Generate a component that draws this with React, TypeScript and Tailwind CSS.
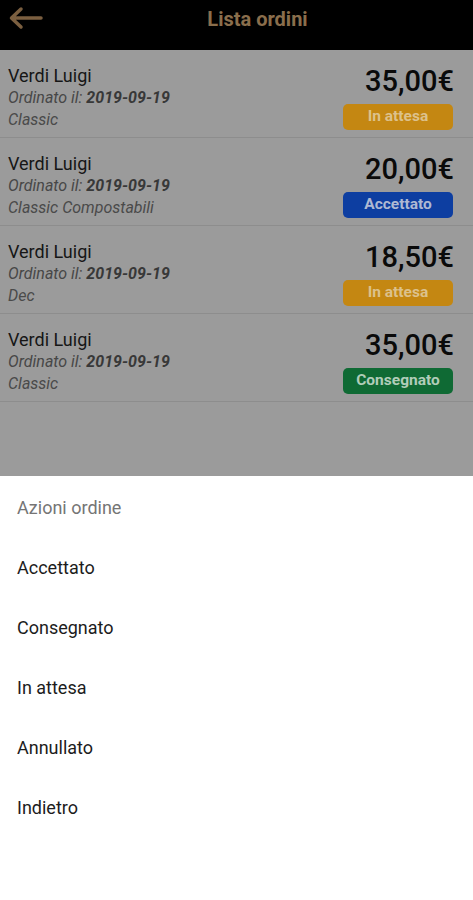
import React from 'react';

type Order = {
    name: string;
    date: string;
    product: string;
    price: string;
    status: 'attesa' | 'accettato' | 'consegnato';
};

const orders: Order[] = [
    { name: 'Verdi Luigi', date: '2019-09-19', product: 'Classic', price: '35,00€', status: 'attesa' },
    { name: 'Verdi Luigi', date: '2019-09-19', product: 'Classic Compostabili', price: '20,00€', status: 'accettato' },
    { name: 'Verdi Luigi', date: '2019-09-19', product: 'Dec', price: '18,50€', status: 'attesa' },
    { name: 'Verdi Luigi', date: '2019-09-19', product: 'Classic', price: '35,00€', status: 'consegnato' },
];

function StatusBadge({ status }: { status: Order['status'] }) {
    if (status === 'accettato') {
        return (
            <div className="w-[110px] h-[26px] rounded-[5px] bg-[#0d3ea1] text-[#aeb9d3] text-[15.5px] font-bold flex items-center justify-center">
                Accettato
            </div>
        );
    }
    if (status === 'consegnato') {
        return (
            <div className="w-[110px] h-[26px] rounded-[5px] bg-[#0f6a34] text-[#b1cdb9] text-[15.5px] font-bold flex items-center justify-center">
                Consegnato
            </div>
        );
    }
    return (
        <div className="w-[110px] h-[26px] rounded-[5px] bg-[#c48712] text-[#dcc18c] text-[15.5px] font-bold flex items-center justify-center">
            In attesa
        </div>
    );
}

function OrderRow({ order }: { order: Order }) {
    return (
        <div className="flex justify-between h-[88px] pl-2 pr-5 pt-[15px] border-b border-[#8d8d8d]">
            <div className="flex flex-col">
                <span className="text-[18px] leading-[22px] text-[#161616]">{order.name}</span>
                <span className="text-[16px] leading-[22px] italic text-[#474747]">
                    Ordinato il: <span className="font-bold text-[#383838]">{order.date}</span>
                </span>
                <span className="text-[16px] leading-[22px] italic text-[#4a4a4a]">{order.product}</span>
            </div>
            <div className="flex flex-col items-end">
                <span className="text-[29px] leading-[34px] -mt-[1px] font-medium text-[#0a0a0a] -mr-[1px]">{order.price}</span>
                <div className="mt-[6px]">
                    <StatusBadge status={order.status} />
                </div>
            </div>
        </div>
    );
}

const actions = ['Accettato', 'Consegnato', 'In attesa', 'Annullato', 'Indietro'];

export default function App() {
    return (
        <div className="w-[473px] h-[900px] flex flex-col bg-white font-['Roboto',sans-serif] overflow-hidden">
            <div className="h-[476px] flex flex-col bg-[#9b9b9b]">
                <div className="h-[50px] bg-black flex items-start pt-[6px]">
                    <svg className="ml-[8px] shrink-0" width="36" height="26" viewBox="0 0 36 26" fill="none">
                        <path d="M33 12H4M13 3L3.5 12L13 21" stroke="#7b5f40" strokeWidth="3.5" strokeLinecap="round" strokeLinejoin="round" />
                    </svg>
                    <div className="flex-1 text-center text-[20px] leading-[26px] font-bold text-[#8a6e4c] pr-[2px] pl-[8px]">Lista ordini</div>
                    <div className="w-[8px]" />
                </div>
                {orders.map((o, i) => (
                    <OrderRow key={i} order={o} />
                ))}
            </div>
            <div className="flex flex-col pl-[17px] pt-[1px]">
                <div className="h-[60px] flex items-center text-[18px] text-[#757575]">Azioni ordine</div>
                {actions.map((a) => (
                    <div key={a} className="h-[60px] flex items-center text-[18px] text-[#1c1c1c]">
                        {a}
                    </div>
                ))}
            </div>
        </div>
    );
}
